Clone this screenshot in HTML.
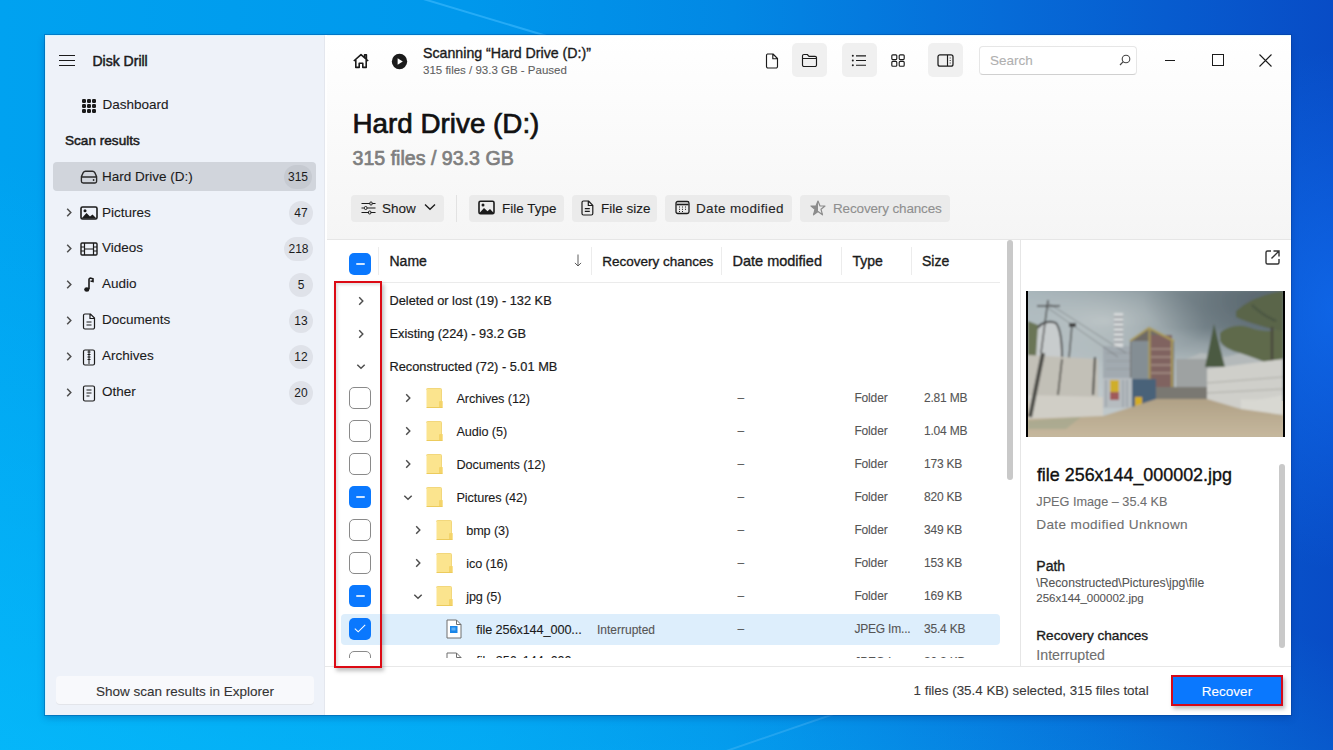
<!DOCTYPE html>
<html><head><meta charset="utf-8">
<style>
*{box-sizing:border-box;margin:0;padding:0}
html,body{width:1333px;height:750px;overflow:hidden}
body{font-family:"Liberation Sans",sans-serif;color:#1b1b1b;position:relative;
background:linear-gradient(20deg,rgba(8,196,255,0.6) 0%,rgba(8,196,255,0) 48%),linear-gradient(90deg,#00a2f0 0%,#0098ec 35%,#0288e4 55%,#066cd8 75%,#084cc6 100%)}
.a{position:absolute}
.t{position:absolute;white-space:nowrap;line-height:1;-webkit-text-stroke-width:0.1px}
.sb{font-weight:400;-webkit-text-stroke-width:0.35px}
#bgov{position:absolute;left:0;top:0;width:1333px;height:750px;background:radial-gradient(ellipse 160px 260px at 1333px 310px,rgba(20,120,255,0.55),rgba(20,120,255,0))}
#win{position:absolute;left:45px;top:35px;width:1246px;height:680px;background:#fff;box-shadow:0 0 0 1px rgba(0,50,130,0.3),0 3px 7px rgba(0,40,110,0.28)}
#side{position:absolute;left:45px;top:35px;width:280px;height:680px;border-top:1px solid #d6f6ff;border-left:1px solid #d6f6ff;background:#eef2f9;border-right:1px solid #e4e7ee}
#mainhdr{position:absolute;left:327px;top:35px;border-top:1px solid #e6fbff;width:964px;height:205px;background:linear-gradient(180deg,#ffffff 0%,#fbfbfb 40%,#f5f5f5 100%)}
#table{position:absolute;left:327px;top:239px;width:693px;height:427px;background:#fff;border-top:1px solid #e6e6e6;overflow:hidden}
#panel{position:absolute;left:1020px;top:239px;width:271px;height:427px;background:#fff;border-left:1px solid #e6e6e6;border-top:1px solid #e6e6e6}
#bottom{position:absolute;left:325px;top:666px;width:966px;height:49px;background:#fff;border-top:1px solid #e8e8e8}
.badge{position:absolute;height:24px;min-width:24px;border-radius:12px;background:#dfe2e9;font-size:12px;line-height:25.5px;text-align:center;padding:0 4px;color:#1b1b1b}
.chev{position:absolute}
</style></head><body>
<div id="bgov"></div>
<svg class="a" style="left:0;top:0" width="1333" height="750"><path d="M400 -8L560 40" stroke="rgba(70,190,255,0.55)" stroke-width="2"/><path d="M700 760L860 705" stroke="rgba(140,215,255,0.22)" stroke-width="2"/></svg>
<div id="win"></div>
<div id="side"></div>
<div id="mainhdr"></div>
<div id="table"></div>
<div id="panel"></div>
<div id="bottom"></div>

<!-- SIDEBAR -->
<svg class="a" style="left:59px;top:54px" width="17" height="13" viewBox="0 0 17 13"><path d="M0 1.5H16M0 6.5H16M0 11.5H16" stroke="#1b1b1b" stroke-width="1.2"/></svg>
<div class="t sb" style="left:92.5px;top:54px;font-size:14px;-webkit-text-stroke-width:0.5px">Disk Drill</div>

<svg class="a" style="left:82px;top:98.5px" width="14" height="14" viewBox="0 0 14 14" fill="#1b1b1b"><rect x="0" y="0" width="4" height="4" rx="1.2"/><rect x="5" y="0" width="4" height="4" rx="1.2"/><rect x="10" y="0" width="4" height="4" rx="1.2"/><rect x="0" y="5" width="4" height="4" rx="1.2"/><rect x="5" y="5" width="4" height="4" rx="1.2"/><rect x="10" y="5" width="4" height="4" rx="1.2"/><rect x="0" y="10" width="4" height="4" rx="1.2"/><rect x="5" y="10" width="4" height="4" rx="1.2"/><rect x="10" y="10" width="4" height="4" rx="1.2"/></svg>
<div class="t" style="left:102.5px;top:97.5px;font-size:13.5px">Dashboard</div>

<div class="t sb" style="left:65px;top:133.8px;font-size:13.6px;-webkit-text-stroke-width:0.5px">Scan results</div>

<div class="a" style="left:53px;top:162px;width:263px;height:29px;background:#d1d5dc;border-radius:4px"></div>
<svg class="a" style="left:80px;top:170px" width="18" height="14" viewBox="0 0 18 14"><path d="M5.5 1.2H12.5Q14 1.2 14.8 2.6L16.6 6.6V11.2A1.8 1.8 0 0 1 14.8 13H3.2A1.8 1.8 0 0 1 1.4 11.2V6.6L3.2 2.6Q4 1.2 5.5 1.2Z M1.6 7H16.4" fill="none" stroke="#2a2a2a" stroke-width="1.35" stroke-linejoin="round"/><circle cx="13.6" cy="10" r="0.9" fill="#2a2a2a"/></svg>
<div class="t" style="left:102px;top:169.5px;font-size:13.5px">Hard Drive (D:)</div>
<div class="badge" style="left:284px;top:165px;min-width:28px;background:#c6cad1">315</div>

<!-- category rows -->
<svg class="chev" style="left:65px;top:207px" width="8" height="11" viewBox="0 0 8 11"><path d="M2.2 1.8L5.8 5.5L2.2 9.2" fill="none" stroke="#4e4e4e" stroke-width="1.5"/></svg>
<svg class="a" style="left:80px;top:206px" width="18" height="14" viewBox="0 0 18 14"><rect x="1" y="1" width="16" height="12" rx="1.5" fill="none" stroke="#1b1b1b" stroke-width="1.6"/><path d="M1.5 12.5L6.5 7L10 10.5L12.5 8.5L16.5 12.5Z" fill="#1b1b1b"/><circle cx="5" cy="4.7" r="1.5" fill="#1b1b1b"/></svg>
<div class="t" style="left:102px;top:205.7px;font-size:13.5px">Pictures</div>
<div class="badge" style="left:289px;top:201px">47</div>

<svg class="chev" style="left:65px;top:243px" width="8" height="11" viewBox="0 0 8 11"><path d="M2.2 1.8L5.8 5.5L2.2 9.2" fill="none" stroke="#4e4e4e" stroke-width="1.5"/></svg>
<svg class="a" style="left:80px;top:242px" width="18" height="14" viewBox="0 0 18 14"><rect x="1" y="1" width="16" height="12" rx="1" fill="none" stroke="#1b1b1b" stroke-width="1.4"/><path d="M4.5 1V13M13.5 1V13M1 5H4.5M1 9H4.5M13.5 5H17M13.5 9H17M4.5 7H13.5" stroke="#1b1b1b" stroke-width="1.2"/></svg>
<div class="t" style="left:102px;top:241.2px;font-size:13.5px">Videos</div>
<div class="badge" style="left:284px;top:237px;min-width:29px">218</div>

<svg class="chev" style="left:65px;top:279px" width="8" height="11" viewBox="0 0 8 11"><path d="M2.2 1.8L5.8 5.5L2.2 9.2" fill="none" stroke="#4e4e4e" stroke-width="1.5"/></svg>
<svg class="a" style="left:82px;top:277px" width="14" height="16" viewBox="0 0 14 16"><path d="M7 12V2.5C7 1.5 8 1 9 1.2L11 1.8V4.5L8.5 4" fill="none" stroke="#1b1b1b" stroke-width="1.6"/><ellipse cx="4.8" cy="12.5" rx="2.6" ry="2.2" fill="#1b1b1b"/></svg>
<div class="t" style="left:102px;top:277.2px;font-size:13.5px">Audio</div>
<div class="badge" style="left:289px;top:273px">5</div>

<svg class="chev" style="left:65px;top:315px" width="8" height="11" viewBox="0 0 8 11"><path d="M2.2 1.8L5.8 5.5L2.2 9.2" fill="none" stroke="#4e4e4e" stroke-width="1.5"/></svg>
<svg class="a" style="left:82px;top:313px" width="14" height="17" viewBox="0 0 14 17"><path d="M2.5 1H8.5L12.5 5V14.5A1.5 1.5 0 0 1 11 16H3A1.5 1.5 0 0 1 1.5 14.5V2.5A1.5 1.5 0 0 1 3 1Z M8 1.2V5.5H12.3 M4.5 9H9.5M4.5 12H9.5" fill="none" stroke="#1b1b1b" stroke-width="1.2"/></svg>
<div class="t" style="left:102px;top:313.2px;font-size:13.5px">Documents</div>
<div class="badge" style="left:289px;top:309px">13</div>

<svg class="chev" style="left:65px;top:351px" width="8" height="11" viewBox="0 0 8 11"><path d="M2.2 1.8L5.8 5.5L2.2 9.2" fill="none" stroke="#4e4e4e" stroke-width="1.5"/></svg>
<svg class="a" style="left:82px;top:349px" width="14" height="17" viewBox="0 0 14 17"><rect x="1.5" y="1" width="11" height="15" rx="1.5" fill="none" stroke="#1b1b1b" stroke-width="1.2"/><path d="M7 1V15M5.5 3H8.5M5.5 5.5H8.5M5.5 8H8.5M5.5 10.5H8.5" stroke="#1b1b1b" stroke-width="1"/></svg>
<div class="t" style="left:102px;top:349.2px;font-size:13.5px">Archives</div>
<div class="badge" style="left:289px;top:345px">12</div>

<svg class="chev" style="left:65px;top:387px" width="8" height="11" viewBox="0 0 8 11"><path d="M2.2 1.8L5.8 5.5L2.2 9.2" fill="none" stroke="#4e4e4e" stroke-width="1.5"/></svg>
<svg class="a" style="left:82px;top:385px" width="14" height="17" viewBox="0 0 14 17"><rect x="1.5" y="1" width="11" height="15" rx="1.5" fill="none" stroke="#1b1b1b" stroke-width="1.2"/><path d="M4.5 5H9.5M4.5 8H9.5M4.5 11H7.5" stroke="#1b1b1b" stroke-width="1.1"/></svg>
<div class="t" style="left:102px;top:385.2px;font-size:13.5px">Other</div>
<div class="badge" style="left:289px;top:381px">20</div>

<div class="a" style="left:56px;top:676px;width:258px;height:28px;background:#f8f9fc;border-radius:4px;box-shadow:0 1px 0 #e3e5ea"></div>
<div class="t" style="left:56px;width:258px;text-align:center;top:684.5px;font-size:13.5px;color:#333">Show scan results in Explorer</div>


<!-- MAIN HEADER -->
<svg class="a" style="left:352px;top:53px" width="18" height="16" viewBox="0 0 18 16"><path d="M1.8 8L9 1.6L16.2 8 M12.6 4.6V1.8H14.4V6.2 M3.8 6.4V14.4H7.2V10.2H10.8V14.4H14.2V6.4" fill="none" stroke="#1b1b1b" stroke-width="1.6" stroke-linejoin="round"/></svg>
<svg class="a" style="left:391px;top:53px" width="17" height="17" viewBox="0 0 17 17"><circle cx="8.5" cy="8.5" r="7.7" fill="#1b1b1b"/><path d="M6.6 5.2V11.8L11.8 8.5Z" fill="#fff"/></svg>
<div class="t sb" style="left:423px;top:46.3px;font-size:14.2px">Scanning “Hard Drive (D:)”</div>
<div class="t" style="left:423px;top:65.3px;font-size:11.5px;color:#5f5f5f">315 files / 93.3 GB - Paused</div>

<!-- toolbar icons -->
<svg class="a" style="left:765px;top:53px" width="14" height="16" viewBox="0 0 14 16"><path d="M2.5 1H8L12.5 5.5V13.5A1.5 1.5 0 0 1 11 15H3A1.5 1.5 0 0 1 1.5 13.5V2.5A1.5 1.5 0 0 1 2.5 1Z M7.8 1.3V5.7H12.2" fill="none" stroke="#1b1b1b" stroke-width="1.15" stroke-linejoin="round"/></svg>
<div class="a" style="left:792px;top:43px;width:35px;height:34px;background:#f0f0f0;border-radius:5px"></div>
<svg class="a" style="left:801px;top:53px" width="17" height="15" viewBox="0 0 17 15"><path d="M1.5 3A1.5 1.5 0 0 1 3 1.5H6.3L8 3.3H14A1.5 1.5 0 0 1 15.5 4.8V12A1.5 1.5 0 0 1 14 13.5H3A1.5 1.5 0 0 1 1.5 12Z M1.5 5.5H15.5" fill="none" stroke="#1b1b1b" stroke-width="1.15" stroke-linejoin="round"/></svg>
<div class="a" style="left:842px;top:43px;width:35px;height:34px;background:#f0f0f0;border-radius:5px"></div>
<svg class="a" style="left:851px;top:54px" width="16" height="13" viewBox="0 0 16 13"><circle cx="1.8" cy="1.8" r="1" fill="#1b1b1b"/><circle cx="1.8" cy="6.5" r="1" fill="#1b1b1b"/><circle cx="1.8" cy="11.2" r="1" fill="#1b1b1b"/><path d="M5 1.8H15M5 6.5H15M5 11.2H15" stroke="#1b1b1b" stroke-width="1.15"/></svg>
<svg class="a" style="left:891px;top:54px" width="14" height="13" viewBox="0 0 14 13"><rect x="0.8" y="0.8" width="5" height="4.8" rx="1" fill="none" stroke="#1b1b1b" stroke-width="1.15"/><rect x="8.2" y="0.8" width="5" height="4.8" rx="1" fill="none" stroke="#1b1b1b" stroke-width="1.15"/><rect x="0.8" y="7.4" width="5" height="4.8" rx="1" fill="none" stroke="#1b1b1b" stroke-width="1.15"/><rect x="8.2" y="7.4" width="5" height="4.8" rx="1" fill="none" stroke="#1b1b1b" stroke-width="1.15"/></svg>
<div class="a" style="left:928px;top:43px;width:35px;height:34px;background:#f0f0f0;border-radius:5px"></div>
<svg class="a" style="left:937px;top:54px" width="17" height="13" viewBox="0 0 17 13"><rect x="1" y="0.8" width="15" height="11.4" rx="2" fill="none" stroke="#1b1b1b" stroke-width="1.25"/><path d="M10.5 1V12" stroke="#1b1b1b" stroke-width="1.15"/><path d="M13.2 3.5V4.5M13.2 6V7M13.2 8.5V9.5" stroke="#1b1b1b" stroke-width="0.9"/></svg>

<!-- search -->
<div class="a" style="left:979px;top:46px;width:158px;height:29px;background:#fff;border:1px solid #e6e6e6;border-bottom-color:#d0d0d0;border-radius:4px"></div>
<div class="t" style="left:990px;top:53.5px;font-size:13.5px;color:#b0b0b0">Search</div>
<svg class="a" style="left:1119px;top:54px" width="12" height="12" viewBox="0 0 12 12"><circle cx="7" cy="5" r="3.8" fill="none" stroke="#444" stroke-width="1.1"/><path d="M4.3 7.7L1 11" stroke="#444" stroke-width="1.2"/></svg>

<!-- window controls -->
<div class="a" style="left:1165px;top:60px;width:10px;height:1px;background:#1b1b1b"></div>
<div class="a" style="left:1212px;top:54px;width:12px;height:12px;border:1px solid #1b1b1b"></div>
<svg class="a" style="left:1259px;top:54px" width="13" height="13" viewBox="0 0 13 13"><path d="M0.5 0.5L12.5 12.5M12.5 0.5L0.5 12.5" stroke="#1b1b1b" stroke-width="1.1"/></svg>

<div class="t sb" style="left:352.5px;top:110px;font-size:27.8px;color:#111;-webkit-text-stroke-width:0.7px">Hard Drive (D:)</div>
<div class="t sb" style="left:352.5px;top:148.8px;font-size:19.6px;color:#7f7f7f;-webkit-text-stroke-width:0.7px">315 files / 93.3 GB</div>

<!-- filter buttons -->
<div class="a" style="left:351px;top:195px;width:93px;height:27px;background:#ebebeb;border-radius:4px"></div>
<svg class="a" style="left:361px;top:201px" width="15" height="14" viewBox="0 0 15 14"><path d="M0.5 2.5H14.5M0.5 7H14.5M0.5 11.5H14.5" stroke="#1b1b1b" stroke-width="1.1"/><rect x="8.8" y="1" width="2.4" height="3" rx="1" fill="#ebebeb" stroke="#1b1b1b" stroke-width="1"/><rect x="3.5" y="5.5" width="2.4" height="3" rx="1" fill="#ebebeb" stroke="#1b1b1b" stroke-width="1"/><rect x="7.5" y="10" width="2.4" height="3" rx="1" fill="#ebebeb" stroke="#1b1b1b" stroke-width="1"/></svg>
<div class="t" style="left:382px;top:201.5px;font-size:13.5px">Show</div>
<svg class="a" style="left:424px;top:203px" width="12" height="8" viewBox="0 0 12 8"><path d="M1 1.5L6 6.3L11 1.5" fill="none" stroke="#1b1b1b" stroke-width="1.3"/></svg>
<div class="a" style="left:456px;top:195px;width:1px;height:27px;background:#e2e2e2"></div>

<div class="a" style="left:469px;top:195px;width:95px;height:27px;background:#ebebeb;border-radius:4px"></div>
<svg class="a" style="left:478px;top:200px" width="17" height="15" viewBox="0 0 17 15"><rect x="1" y="1.2" width="15" height="12.6" rx="1.5" fill="none" stroke="#1b1b1b" stroke-width="1.6"/><path d="M1.5 13L6 8L9.5 11.3L12 9L15.8 13Z" fill="#1b1b1b"/><circle cx="5" cy="5" r="1.5" fill="#1b1b1b"/></svg>
<div class="t" style="left:502px;top:201.5px;font-size:13.5px">File Type</div>

<div class="a" style="left:572px;top:195px;width:85px;height:27px;background:#ebebeb;border-radius:4px"></div>
<svg class="a" style="left:581px;top:200px" width="13" height="16" viewBox="0 0 13 16"><path d="M2.5 1H7.5L11.8 5.3V13.5A1.5 1.5 0 0 1 10.3 15H2.5A1.5 1.5 0 0 1 1 13.5V2.5A1.5 1.5 0 0 1 2.5 1Z M7.3 1.2V5.5H11.6 M3.8 8.7H8.8M3.8 11.3H8.8" fill="none" stroke="#1b1b1b" stroke-width="1.2" stroke-linejoin="round"/></svg>
<div class="t" style="left:601px;top:201.5px;font-size:13.5px">File size</div>

<div class="a" style="left:665px;top:195px;width:127px;height:27px;background:#ebebeb;border-radius:4px"></div>
<svg class="a" style="left:675px;top:200px" width="15" height="15" viewBox="0 0 15 15"><rect x="1" y="1.5" width="13" height="12" rx="1.8" fill="none" stroke="#1b1b1b" stroke-width="1.3"/><path d="M1.5 4.5H13.5" stroke="#1b1b1b" stroke-width="1.6"/><path d="M4 7H5M7 7H8M10 7H11M4 9.3H5M7 9.3H8M10 9.3H11M4 11.5H5M7 11.5H8" stroke="#1b1b1b" stroke-width="1"/></svg>
<div class="t" style="left:696px;top:201.5px;font-size:13.5px;letter-spacing:0.35px;color:#262626">Date modified</div>

<div class="a" style="left:800px;top:195px;width:150px;height:27px;background:#ebebeb;border-radius:4px"></div>
<svg class="a" style="left:810px;top:200px" width="16" height="16" viewBox="0 0 16 16"><path d="M8 1L10 6H15L11 9.3L12.5 14.8L8 11.5L3.5 14.8L5 9.3L1 6H6Z" fill="none" stroke="#8c8c8c" stroke-width="1.2" stroke-linejoin="round"/><path d="M8 1L6 6H1L5 9.3L3.5 14.8L8 11.5Z" fill="#8c8c8c"/></svg>
<div class="t" style="left:833px;top:201.5px;font-size:13.5px;color:#8f8f8f;letter-spacing:-0.15px">Recovery chances</div>



<!-- TABLE -->
<div class="a" style="left:349px;top:253px;width:22px;height:22px;border-radius:5px;background:#0a78fe"></div>
<div class="a" style="left:355.5px;top:263px;width:9px;height:2px;background:#cfe5ff;border-radius:1px"></div>
<div class="a" style="left:378px;top:247px;width:1px;height:28px;background:#ececec"></div>
<div class="t" style="left:389.5px;top:254.15px;font-size:14px;color:#1b1b1b;-webkit-text-stroke-width:0.35px">Name</div>
<svg class="a" style="left:574px;top:254px" width="8" height="13" viewBox="0 0 8 13"><path d="M4 0.5V12M0.9 8.9L4 12L7.1 8.9" fill="none" stroke="#555" stroke-width="0.95"/></svg>
<div class="a" style="left:591px;top:247px;width:1px;height:28px;background:#ececec"></div>
<div class="a" style="left:721.3px;top:247px;width:1px;height:28px;background:#ececec"></div>
<div class="a" style="left:841.3px;top:247px;width:1px;height:28px;background:#ececec"></div>
<div class="a" style="left:911px;top:247px;width:1px;height:28px;background:#ececec"></div>
<div class="t" style="left:602.3px;top:254.57px;font-size:13.5px;color:#1b1b1b;-webkit-text-stroke-width:0.35px">Recovery chances</div>
<div class="t" style="left:732.5px;top:253.73px;font-size:14.5px;color:#1b1b1b;-webkit-text-stroke-width:0.35px">Date modified</div>
<div class="t" style="left:852.4px;top:254.15px;font-size:14px;color:#1b1b1b;-webkit-text-stroke-width:0.35px">Type</div>
<div class="t" style="left:922px;top:254.15px;font-size:14px;color:#1b1b1b;-webkit-text-stroke-width:0.35px">Size</div>
<div class="a" style="left:338px;top:282px;width:662px;height:1px;background:#ebebeb"></div>
<div class="a" style="left:0;top:283px;width:1333px;height:375px;overflow:hidden">
<svg class="a" style="left:356.5px;top:12.80px" width="8" height="10" viewBox="0 0 8 10"><path d="M2.2 1.3L5.8 5L2.2 8.7" fill="none" stroke="#4e4e4e" stroke-width="1.45"/></svg>
<div class="t" style="left:389.5px;top:11.96px;font-size:12.8px;color:#1b1b1b;-webkit-text-stroke-width:0.2px">Deleted or lost (19) - 132 KB</div>
<svg class="a" style="left:356.5px;top:45.80px" width="8" height="10" viewBox="0 0 8 10"><path d="M2.2 1.3L5.8 5L2.2 8.7" fill="none" stroke="#4e4e4e" stroke-width="1.45"/></svg>
<div class="t" style="left:389.5px;top:44.96px;font-size:12.8px;color:#1b1b1b;-webkit-text-stroke-width:0.2px">Existing (224) - 93.2 GB</div>
<svg class="a" style="left:355.5px;top:79.50px" width="10" height="7" viewBox="0 0 10 7"><path d="M1.3 1.7L5 5.3L8.7 1.7" fill="none" stroke="#4e4e4e" stroke-width="1.45"/></svg>
<div class="t" style="left:389.5px;top:77.96px;font-size:12.8px;color:#1b1b1b;-webkit-text-stroke-width:0.2px">Reconstructed (72) - 5.01 MB</div>
<div class="a" style="left:341px;top:330.50px;width:659px;height:31px;background:#ddeefc;border-radius:4px"></div>
<div class="a" style="left:349px;top:104.00px;width:22px;height:22px;border:1px solid #8a8a8a;border-radius:5px;background:#fff"></div>
<svg class="a" style="left:403.5px;top:110.00px" width="8" height="10" viewBox="0 0 8 10"><path d="M2.2 1.3L5.8 5L2.2 8.7" fill="none" stroke="#4e4e4e" stroke-width="1.45"/></svg>
<svg class="a" style="left:426px;top:105.00px" width="17" height="20" viewBox="0 0 17 20"><path d="M1.5 0.5H14.5A1 1 0 0 1 15.5 1.5V12.5L16.5 13.5V19.5H1.5A1 1 0 0 1 0.5 18.5V1.5A1 1 0 0 1 1.5 0.5Z" fill="#fbe48e"/><path d="M0.5 1.5A1 1 0 0 1 1.5 0.5H14.5A1 1 0 0 1 15.5 1.5V19.5" fill="none" stroke="#efd06a" stroke-width="0.8"/><path d="M13 19.5V14A1 1 0 0 1 14 13H16.5V19.5Z" fill="#f4d46a"/><path d="M0.5 19.5H16.5" stroke="#eccb5c" stroke-width="1"/></svg>
<div class="t" style="left:456.5px;top:109.85px;font-size:12.7px;color:#1b1b1b;letter-spacing:-0.1px">Archives (12)</div>
<div class="t" style="left:737.5px;top:108.84px;font-size:12px;color:#555;">–</div>
<div class="t" style="left:854.4px;top:108.84px;font-size:12px;color:#555;letter-spacing:-0.15px">Folder</div>
<div class="t" style="left:924px;top:108.84px;font-size:12px;color:#555;letter-spacing:-0.2px">2.81 MB</div>
<div class="a" style="left:349px;top:137.00px;width:22px;height:22px;border:1px solid #8a8a8a;border-radius:5px;background:#fff"></div>
<svg class="a" style="left:403.5px;top:143.00px" width="8" height="10" viewBox="0 0 8 10"><path d="M2.2 1.3L5.8 5L2.2 8.7" fill="none" stroke="#4e4e4e" stroke-width="1.45"/></svg>
<svg class="a" style="left:426px;top:138.00px" width="17" height="20" viewBox="0 0 17 20"><path d="M1.5 0.5H14.5A1 1 0 0 1 15.5 1.5V12.5L16.5 13.5V19.5H1.5A1 1 0 0 1 0.5 18.5V1.5A1 1 0 0 1 1.5 0.5Z" fill="#fbe48e"/><path d="M0.5 1.5A1 1 0 0 1 1.5 0.5H14.5A1 1 0 0 1 15.5 1.5V19.5" fill="none" stroke="#efd06a" stroke-width="0.8"/><path d="M13 19.5V14A1 1 0 0 1 14 13H16.5V19.5Z" fill="#f4d46a"/><path d="M0.5 19.5H16.5" stroke="#eccb5c" stroke-width="1"/></svg>
<div class="t" style="left:456.5px;top:142.85px;font-size:12.7px;color:#1b1b1b;letter-spacing:-0.1px">Audio (5)</div>
<div class="t" style="left:737.5px;top:141.84px;font-size:12px;color:#555;">–</div>
<div class="t" style="left:854.4px;top:141.84px;font-size:12px;color:#555;letter-spacing:-0.15px">Folder</div>
<div class="t" style="left:924px;top:141.84px;font-size:12px;color:#555;letter-spacing:-0.2px">1.04 MB</div>
<div class="a" style="left:349px;top:170.00px;width:22px;height:22px;border:1px solid #8a8a8a;border-radius:5px;background:#fff"></div>
<svg class="a" style="left:403.5px;top:176.00px" width="8" height="10" viewBox="0 0 8 10"><path d="M2.2 1.3L5.8 5L2.2 8.7" fill="none" stroke="#4e4e4e" stroke-width="1.45"/></svg>
<svg class="a" style="left:426px;top:171.00px" width="17" height="20" viewBox="0 0 17 20"><path d="M1.5 0.5H14.5A1 1 0 0 1 15.5 1.5V12.5L16.5 13.5V19.5H1.5A1 1 0 0 1 0.5 18.5V1.5A1 1 0 0 1 1.5 0.5Z" fill="#fbe48e"/><path d="M0.5 1.5A1 1 0 0 1 1.5 0.5H14.5A1 1 0 0 1 15.5 1.5V19.5" fill="none" stroke="#efd06a" stroke-width="0.8"/><path d="M13 19.5V14A1 1 0 0 1 14 13H16.5V19.5Z" fill="#f4d46a"/><path d="M0.5 19.5H16.5" stroke="#eccb5c" stroke-width="1"/></svg>
<div class="t" style="left:456.5px;top:175.85px;font-size:12.7px;color:#1b1b1b;letter-spacing:-0.1px">Documents (12)</div>
<div class="t" style="left:737.5px;top:174.84px;font-size:12px;color:#555;">–</div>
<div class="t" style="left:854.4px;top:174.84px;font-size:12px;color:#555;letter-spacing:-0.15px">Folder</div>
<div class="t" style="left:924px;top:174.84px;font-size:12px;color:#555;letter-spacing:-0.2px">173 KB</div>
<div class="a" style="left:349px;top:203.00px;width:22px;height:22px;border-radius:5px;background:#0a78fe"></div>
<div class="a" style="left:355.5px;top:213.00px;width:9px;height:2px;background:#cfe5ff;border-radius:1px"></div>
<svg class="a" style="left:402.5px;top:211.00px" width="10" height="7" viewBox="0 0 10 7"><path d="M1.3 1.7L5 5.3L8.7 1.7" fill="none" stroke="#4e4e4e" stroke-width="1.45"/></svg>
<svg class="a" style="left:426px;top:204.00px" width="17" height="20" viewBox="0 0 17 20"><path d="M1.5 0.5H14.5A1 1 0 0 1 15.5 1.5V12.5L16.5 13.5V19.5H1.5A1 1 0 0 1 0.5 18.5V1.5A1 1 0 0 1 1.5 0.5Z" fill="#fbe48e"/><path d="M0.5 1.5A1 1 0 0 1 1.5 0.5H14.5A1 1 0 0 1 15.5 1.5V19.5" fill="none" stroke="#efd06a" stroke-width="0.8"/><path d="M13 19.5V14A1 1 0 0 1 14 13H16.5V19.5Z" fill="#f4d46a"/><path d="M0.5 19.5H16.5" stroke="#eccb5c" stroke-width="1"/></svg>
<div class="t" style="left:456.5px;top:208.85px;font-size:12.7px;color:#1b1b1b;letter-spacing:-0.1px">Pictures (42)</div>
<div class="t" style="left:737.5px;top:207.84px;font-size:12px;color:#555;">–</div>
<div class="t" style="left:854.4px;top:207.84px;font-size:12px;color:#555;letter-spacing:-0.15px">Folder</div>
<div class="t" style="left:924px;top:207.84px;font-size:12px;color:#555;letter-spacing:-0.2px">820 KB</div>
<div class="a" style="left:349px;top:236.00px;width:22px;height:22px;border:1px solid #8a8a8a;border-radius:5px;background:#fff"></div>
<svg class="a" style="left:413.5px;top:242.00px" width="8" height="10" viewBox="0 0 8 10"><path d="M2.2 1.3L5.8 5L2.2 8.7" fill="none" stroke="#4e4e4e" stroke-width="1.45"/></svg>
<svg class="a" style="left:436px;top:237.00px" width="17" height="20" viewBox="0 0 17 20"><path d="M1.5 0.5H14.5A1 1 0 0 1 15.5 1.5V12.5L16.5 13.5V19.5H1.5A1 1 0 0 1 0.5 18.5V1.5A1 1 0 0 1 1.5 0.5Z" fill="#fbe48e"/><path d="M0.5 1.5A1 1 0 0 1 1.5 0.5H14.5A1 1 0 0 1 15.5 1.5V19.5" fill="none" stroke="#efd06a" stroke-width="0.8"/><path d="M13 19.5V14A1 1 0 0 1 14 13H16.5V19.5Z" fill="#f4d46a"/><path d="M0.5 19.5H16.5" stroke="#eccb5c" stroke-width="1"/></svg>
<div class="t" style="left:466.2px;top:241.85px;font-size:12.7px;color:#1b1b1b;letter-spacing:-0.1px">bmp (3)</div>
<div class="t" style="left:737.5px;top:240.84px;font-size:12px;color:#555;">–</div>
<div class="t" style="left:854.4px;top:240.84px;font-size:12px;color:#555;letter-spacing:-0.15px">Folder</div>
<div class="t" style="left:924px;top:240.84px;font-size:12px;color:#555;letter-spacing:-0.2px">349 KB</div>
<div class="a" style="left:349px;top:269.00px;width:22px;height:22px;border:1px solid #8a8a8a;border-radius:5px;background:#fff"></div>
<svg class="a" style="left:413.5px;top:275.00px" width="8" height="10" viewBox="0 0 8 10"><path d="M2.2 1.3L5.8 5L2.2 8.7" fill="none" stroke="#4e4e4e" stroke-width="1.45"/></svg>
<svg class="a" style="left:436px;top:270.00px" width="17" height="20" viewBox="0 0 17 20"><path d="M1.5 0.5H14.5A1 1 0 0 1 15.5 1.5V12.5L16.5 13.5V19.5H1.5A1 1 0 0 1 0.5 18.5V1.5A1 1 0 0 1 1.5 0.5Z" fill="#fbe48e"/><path d="M0.5 1.5A1 1 0 0 1 1.5 0.5H14.5A1 1 0 0 1 15.5 1.5V19.5" fill="none" stroke="#efd06a" stroke-width="0.8"/><path d="M13 19.5V14A1 1 0 0 1 14 13H16.5V19.5Z" fill="#f4d46a"/><path d="M0.5 19.5H16.5" stroke="#eccb5c" stroke-width="1"/></svg>
<div class="t" style="left:466.2px;top:274.85px;font-size:12.7px;color:#1b1b1b;letter-spacing:-0.1px">ico (16)</div>
<div class="t" style="left:737.5px;top:273.84px;font-size:12px;color:#555;">–</div>
<div class="t" style="left:854.4px;top:273.84px;font-size:12px;color:#555;letter-spacing:-0.15px">Folder</div>
<div class="t" style="left:924px;top:273.84px;font-size:12px;color:#555;letter-spacing:-0.2px">153 KB</div>
<div class="a" style="left:349px;top:302.00px;width:22px;height:22px;border-radius:5px;background:#0a78fe"></div>
<div class="a" style="left:355.5px;top:312.00px;width:9px;height:2px;background:#cfe5ff;border-radius:1px"></div>
<svg class="a" style="left:412.5px;top:310.00px" width="10" height="7" viewBox="0 0 10 7"><path d="M1.3 1.7L5 5.3L8.7 1.7" fill="none" stroke="#4e4e4e" stroke-width="1.45"/></svg>
<svg class="a" style="left:436px;top:303.00px" width="17" height="20" viewBox="0 0 17 20"><path d="M1.5 0.5H14.5A1 1 0 0 1 15.5 1.5V12.5L16.5 13.5V19.5H1.5A1 1 0 0 1 0.5 18.5V1.5A1 1 0 0 1 1.5 0.5Z" fill="#fbe48e"/><path d="M0.5 1.5A1 1 0 0 1 1.5 0.5H14.5A1 1 0 0 1 15.5 1.5V19.5" fill="none" stroke="#efd06a" stroke-width="0.8"/><path d="M13 19.5V14A1 1 0 0 1 14 13H16.5V19.5Z" fill="#f4d46a"/><path d="M0.5 19.5H16.5" stroke="#eccb5c" stroke-width="1"/></svg>
<div class="t" style="left:466.2px;top:307.85px;font-size:12.7px;color:#1b1b1b;letter-spacing:-0.1px">jpg (5)</div>
<div class="t" style="left:737.5px;top:306.84px;font-size:12px;color:#555;">–</div>
<div class="t" style="left:854.4px;top:306.84px;font-size:12px;color:#555;letter-spacing:-0.15px">Folder</div>
<div class="t" style="left:924px;top:306.84px;font-size:12px;color:#555;letter-spacing:-0.2px">169 KB</div>
<div class="a" style="left:349px;top:335.00px;width:22px;height:22px;border-radius:5px;background:#0a78fe"></div>
<svg class="a" style="left:354px;top:341.00px" width="12" height="9" viewBox="0 0 12 9"><path d="M0.8 4.6L4.2 7.8L11.2 0.9" fill="none" stroke="#fff" stroke-width="1.1"/></svg>
<svg class="a" style="left:446px;top:336.00px" width="16" height="20" viewBox="0 0 16 20"><path d="M1 1H10.5L15 5.5V19H1Z" fill="#fff" stroke="#6e6e6e" stroke-width="1"/><path d="M10.5 1V5.5H15" fill="none" stroke="#6e6e6e" stroke-width="1"/><rect x="4" y="7" width="7.5" height="7" fill="#1a86e8"/><rect x="5.5" y="8.5" width="4" height="3" fill="#5fb0f5"/></svg>
<div class="t" style="left:476.3px;top:340.65px;font-size:12.7px;color:#1b1b1b;letter-spacing:-0.1px">file 256x144_000...</div>
<div class="t" style="left:597px;top:340.84px;font-size:12px;color:#555;">Interrupted</div>
<div class="t" style="left:737.5px;top:339.84px;font-size:12px;color:#555;">–</div>
<div class="t" style="left:854.4px;top:339.84px;font-size:12px;color:#555;letter-spacing:-0.2px">JPEG Im...</div>
<div class="t" style="left:924px;top:339.84px;font-size:12px;color:#555;letter-spacing:-0.2px">35.4 KB</div>
<div class="a" style="left:349px;top:368.00px;width:22px;height:22px;border:1px solid #8a8a8a;border-radius:5px;background:#fff"></div>
<svg class="a" style="left:446px;top:369.00px" width="16" height="20" viewBox="0 0 16 20"><path d="M1 1H10.5L15 5.5V19H1Z" fill="#fff" stroke="#6e6e6e" stroke-width="1"/><path d="M10.5 1V5.5H15" fill="none" stroke="#6e6e6e" stroke-width="1"/></svg>
<div class="t" style="left:476.3px;top:371.92px;font-size:12.5px;color:#1b1b1b;">file 256x144_000...</div>
<div class="t" style="left:854.4px;top:372.84px;font-size:12px;color:#555;letter-spacing:-0.2px">JPEG Im...</div>
<div class="t" style="left:924px;top:372.84px;font-size:12px;color:#555;letter-spacing:-0.2px">30.2 KB</div>
</div>
<div class="a" style="left:1007px;top:240px;width:6px;height:240px;background:#c9c9c9;border-radius:3px"></div>
<div class="a" style="left:334px;top:281px;width:48px;height:387px;border:2.6px solid #dc0a14;box-shadow:2px 3px 4px rgba(0,0,0,0.25), inset 2px 2px 3px rgba(0,0,0,0.12)"></div>
<!-- PANEL -->
<svg class="a" style="left:1264px;top:249px" width="17" height="17" viewBox="0 0 17 17"><path d="M7 2H3.5A1.5 1.5 0 0 0 2 3.5V13.5A1.5 1.5 0 0 0 3.5 15H13.5A1.5 1.5 0 0 0 15 13.5V10 M9.5 2H15V7.5 M15 2L7.5 9.5" fill="none" stroke="#333" stroke-width="1.4"/></svg>
<svg class="a" style="left:1026px;top:291px" width="259" height="146" viewBox="0 0 259 146">
<defs>
<linearGradient id="sky" x1="0" y1="0" x2="1" y2="0"><stop offset="0" stop-color="#aab7bc"/><stop offset="0.45" stop-color="#8c9aa0"/><stop offset="1" stop-color="#66747b"/></linearGradient><linearGradient id="skyv" x1="0" y1="0" x2="0" y2="1"><stop offset="0" stop-color="#c4ccce" stop-opacity="0"/><stop offset="0.25" stop-color="#c4ccce" stop-opacity="0"/><stop offset="0.5" stop-color="#c4ccce" stop-opacity="0.7"/><stop offset="0.7" stop-color="#c4ccce" stop-opacity="0.9"/></linearGradient>
<radialGradient id="skyl" cx="0.3" cy="0.3" r="0.4"><stop offset="0" stop-color="#d4d9d8" stop-opacity="0.6"/><stop offset="1" stop-color="#d4d9d8" stop-opacity="0"/></radialGradient>
<radialGradient id="skyr" cx="0.95" cy="0.1" r="0.5"><stop offset="0" stop-color="#55626a" stop-opacity="0.8"/><stop offset="1" stop-color="#55626a" stop-opacity="0"/></radialGradient>
<linearGradient id="gnd" x1="0" y1="0" x2="0" y2="1"><stop offset="0" stop-color="#b0a186"/><stop offset="1" stop-color="#c6b89e"/></linearGradient>
<filter id="bl" x="-5%" y="-5%" width="110%" height="110%"><feGaussianBlur stdDeviation="0.9"/></filter>
</defs>
<rect width="259" height="146" fill="url(#sky)"/><rect y="110" width="259" height="36" fill="#c2b49a"/>
<g filter="url(#bl)">
<rect x="2" y="0" width="255" height="146" fill="url(#sky)"/>
<rect x="2" y="0" width="255" height="146" fill="url(#skyv)"/><rect x="2" y="0" width="255" height="100" fill="url(#skyl)"/>
<rect x="2" y="0" width="255" height="100" fill="url(#skyr)"/>
<!-- distant mountains / buildings -->
<path d="M150 72L175 62L200 66L230 58L257 62V100H150Z" fill="#b4b9ba"/>
<rect x="150" y="68" width="32" height="40" fill="#9ea2a2"/>
<rect x="77" y="55" width="30" height="32" fill="#a2aab0"/>
<path d="M80 62H105M80 70H105M80 78H105" stroke="#8f979c" stroke-width="0.8"/>
<!-- tower -->
<rect x="88" y="22" width="9" height="34" fill="#d6d9da"/>
<path d="M88 26H97M88 31H97M88 36H97M88 41H97M88 46H97M88 51H97" stroke="#5e6468" stroke-width="1.2"/>
<!-- building -->
<path d="M104 50L123 37L148 50V98H104Z" fill="#6e6a66"/>
<rect x="124" y="44" width="22" height="54" fill="#806460"/>
<path d="M125 58H146M125 66H146M125 74H146M125 82H146" stroke="#b8a49a" stroke-width="1.1"/>
<rect x="105" y="50" width="18" height="48" fill="#848e94"/>
<path d="M123.5 38V92M146 50V98M104 50L123 37L148 50" stroke="#a99a58" stroke-width="2" fill="none"/>
<!-- left arch -->
<path d="M8 66V42Q16 27 30 32Q36 40 36 66Z" fill="#c8cccd"/>
<path d="M8 66V42Q16 27 30 32Q36 40 36 66" fill="none" stroke="#3c3c3c" stroke-width="1.8"/>
<path d="M2 30L12 34L10 66H2Z" fill="#6a7456"/>
<!-- pole -->
<path d="M22 9L15 62M11 15H34M46 34L43 67" stroke="#4a4a4a" stroke-width="1.5"/>
<rect x="43" y="32" width="7" height="4" fill="#3e3e3e"/>
<path d="M22 12L100 62M22 17L92 66" stroke="#3a3a3a" stroke-width="0.35"/>
<!-- trees -->
<path d="M188 33L179 76H199Z" fill="#4b5a42"/>
<path d="M194 42Q206 32 222 36Q232 40 244 40L257 36V100H246V74Q232 68 214 62Q198 58 194 50Z" fill="#5f6a4c"/>
<path d="M210 20Q228 4 257 0V40Q244 38 232 34Q218 30 210 26Z" fill="#5a654a"/>
<path d="M226 14Q236 24 250 30" stroke="#4a5440" stroke-width="2" fill="none"/>
<path d="M246 36V100" stroke="#4a4a3c" stroke-width="2.6"/>
<!-- left walls -->
<path d="M2 64L72 68V108H2Z" fill="#c2c0b7"/>
<path d="M36 68L32 104" stroke="#3e3e3a" stroke-width="1.6"/><path d="M69 66L67 104" stroke="#3e3e3a" stroke-width="2"/>

<path d="M2 104L77 106V127L2 130Z" fill="#d0cec6"/><path d="M17 62L4 126" stroke="#4a4a44" stroke-width="4"/>
<!-- right wall -->
<path d="M181 78L257 68V122L181 114Z" fill="#cfcfca"/>
<path d="M181 92L257 86M181 102L257 98" stroke="#a9a9a3" stroke-width="0.9"/>
<path d="M215 108Q230 110 257 104V124L215 120Z" fill="#d8d8d2"/>
<!-- containers -->
<rect x="77" y="87" width="29" height="30" fill="#b6bcc0"/>
<rect x="84" y="89" width="9" height="12" fill="#cfae2a"/><rect x="84" y="101" width="9" height="8" fill="#a05a5a"/>
<path d="M80 89V116M97 89V116M101 89V116" stroke="#8e969c" stroke-width="1"/>
<rect x="106" y="88" width="24" height="28" fill="#4a6279"/>
<rect x="109" y="106" width="7" height="10" fill="#d4ad22"/>
<!-- gate -->
<rect x="130" y="96" width="51" height="12" fill="#7a7872"/>
<!-- ground -->
<path d="M2 128L77 125L106 116L130 108H181L215 118L257 124V146H2Z" fill="url(#gnd)"/>
<path d="M2 130L55 126L40 138H2Z" fill="#a4a88f" opacity="0.7"/>
</g>
<rect x="0" y="0" width="2" height="146" fill="#000"/>
<rect x="257" y="0" width="2" height="146" fill="#000"/>
</svg>

<div class="t" style="left:1036.9px;top:466.75px;font-size:17.9px;color:#111;-webkit-text-stroke:0.35px #111">file 256x144_000002.jpg</div>
<div class="t" style="left:1036.3px;top:495.75px;font-size:12.7px;color:#6f6f6f;">JPEG Image – 35.4 KB</div>
<div class="t" style="left:1036.3px;top:518.49px;font-size:13.6px;color:#6f6f6f;letter-spacing:0.35px">Date modified Unknown</div>
<div class="t" style="left:1036.3px;top:558.65px;font-size:14px;color:#1b1b1b;-webkit-text-stroke-width:0.35px">Path</div>
<div class="t" style="left:1036.3px;top:577.17px;font-size:12.2px;color:#555;letter-spacing:0px">\Reconstructed\Pictures\jpg\file</div>
<div class="t" style="left:1036.3px;top:593.27px;font-size:11.5px;color:#555;">256x144_000002.jpg</div>
<div class="t" style="left:1036.3px;top:629.19px;font-size:13.6px;color:#1b1b1b;-webkit-text-stroke-width:0.35px">Recovery chances</div>
<div class="t" style="left:1036.3px;top:648.48px;font-size:14.2px;color:#6f6f6f;">Interrupted</div>
<div class="a" style="left:1279px;top:464px;width:6px;height:184px;background:#c9c9c9;border-radius:3px"></div>
<!-- BOTTOM -->
<div class="t" style="left:913.5px;top:684.26px;font-size:13.4px;color:#3a3a3a;">1 files (35.4 KB) selected, 315 files total</div>
<div class="a" style="left:1171px;top:675px;width:112px;height:31px;background:#0a78fe;border:2.5px solid #d40a1a;box-shadow:2px 3px 4px rgba(0,0,0,0.25)"></div>
<div class="t" style="left:1171px;width:112px;text-align:center;top:684.8px;font-size:13.5px;color:#fff">Recover</div>
</body></html>
